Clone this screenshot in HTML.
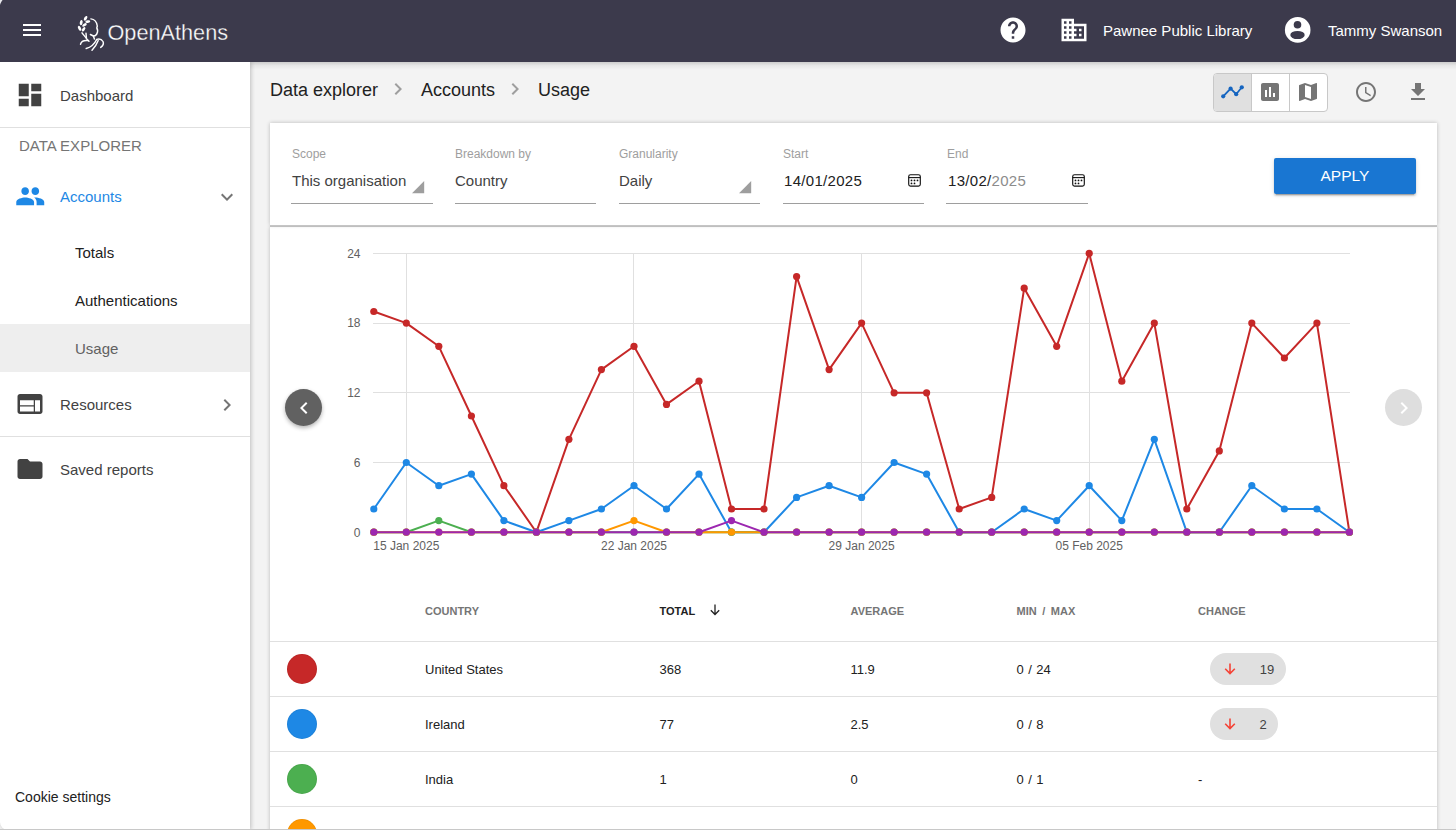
<!DOCTYPE html>
<html><head><meta charset="utf-8">
<style>
*{box-sizing:border-box;margin:0;padding:0}
html,body{width:1456px;height:830px;overflow:hidden;background:#f3f3f3;font-family:"Liberation Sans",sans-serif;color:#212121}
svg text{font-family:"Liberation Sans",sans-serif}
.abs{position:absolute}
.t{position:absolute;white-space:nowrap;line-height:1}
#top{position:absolute;left:0;top:0;width:1456px;height:62px;background:#3c3a4c;z-index:10}
#side{position:absolute;left:0;top:62px;width:250px;height:768px;background:#fff;box-shadow:1px 0 4px rgba(0,0,0,.22);z-index:8;border-bottom-left-radius:8px}
.card{position:absolute;background:#fff;box-shadow:0 0 4px rgba(0,0,0,.24)}
.lbl{font-size:12px;color:#9e9e9e}
.val{font-size:15px;color:#424242}
.uline{position:absolute;height:1px;background:#9e9e9e}
.th{font-size:11px;font-weight:bold;color:#757575}
.td{font-size:13px;color:#212121}
.rowline{position:absolute;left:270px;width:1167px;height:1px;background:#e0e0e0;z-index:4}
</style></head>
<body>
<!-- TOP BAR -->
<div id="top">
  <div class="abs" style="left:23px;top:24px;width:18px;height:2px;background:#fff"></div>
  <div class="abs" style="left:23px;top:29px;width:18px;height:2px;background:#fff"></div>
  <div class="abs" style="left:23px;top:34px;width:18px;height:2px;background:#fff"></div>
  <!-- logo -->
  <svg class="abs" style="left:74px;top:12px" width="34" height="40" viewBox="0 0 34 40" fill="none" stroke="#fff" stroke-width="1.45" stroke-linecap="round" stroke-linejoin="round">
    <g fill="#fff" stroke="none">
      <ellipse cx="11.6" cy="6.3" rx="1.4" ry="2.6" transform="rotate(30 11.6 6.3)"/>
      <ellipse cx="13.8" cy="9.6" rx="2.5" ry="1.3" transform="rotate(-8 13.8 9.6)"/>
      <ellipse cx="7.2" cy="10.6" rx="1.4" ry="2.7" transform="rotate(12 7.2 10.6)"/>
      <ellipse cx="10.5" cy="12.9" rx="2.5" ry="1.3" transform="rotate(-30 10.5 12.9)"/>
      <ellipse cx="5.6" cy="16.3" rx="1.4" ry="2.7" transform="rotate(-28 5.6 16.3)"/>
      <ellipse cx="9.6" cy="17.3" rx="1.3" ry="2.5" transform="rotate(35 9.6 17.3)"/>
    </g>
    <path d="M8 20.8 C9.5 23,11.5 25,12.8 27 L15 29.3"/>
    <path d="M12 21.2 L12.4 25.8"/>
    <path d="M13.8 28.6 C11 28.3,7.5 28.5,6.5 32.3"/>
    <path d="M16.9 6.9 C20 7.2,22.6 9.5,23.3 14 L22.8 16 C23.8 17.5,23.8 20,22.8 22 C22 23.3,20.5 24.2,19.4 24 L16.4 22.5"/>
    <path d="M19.4 24 L20.4 27"/>
    <path d="M12.2 36.5 C16 35.5,20.5 32,22.5 27.8"/>
    <path d="M18 38.2 C20.5 35.5,23 32,24.2 28.6"/>
    <path d="M22.6 27.4 C25 26.6,27.5 27,29 29.5 C30 31.5,28.5 34,26.7 35.4"/>
  </svg>
  <svg class="abs" style="left:106px;top:14px" width="130" height="34" viewBox="0 0 130 34">
    <text x="1.5" y="25.6" font-size="21.7" fill="#fff" stroke="#3c3a4c" stroke-width="0.3">OpenAthens</text>
  </svg>
  <!-- help -->
  <svg class="abs" style="left:998px;top:15px" width="30" height="30" viewBox="0 0 24 24"><path fill="#fff" d="M12 2C6.48 2 2 6.48 2 12s4.48 10 10 10 10-4.48 10-10S17.52 2 12 2zm1 17h-2v-2h2v2zm2.07-7.75l-.9.92C13.45 12.9 13 13.5 13 15h-2v-.5c0-1.1.45-2.1 1.17-2.83l1.24-1.26c.37-.36.59-.86.59-1.41 0-1.1-.9-2-2-2s-2 .9-2 2H8c0-2.21 1.79-4 4-4s4 1.79 4 4c0 .88-.36 1.68-.93 2.25z"/></svg>
  <!-- business -->
  <svg class="abs" style="left:1058.5px;top:15px" width="30" height="30" viewBox="0 0 24 24"><path fill="#fff" d="M12 7V3H2v18h20V7H12zM6 19H4v-2h2v2zm0-4H4v-2h2v2zm0-4H4V9h2v2zm0-4H4V5h2v2zm4 12H8v-2h2v2zm0-4H8v-2h2v2zm0-4H8V9h2v2zm0-4H8V5h2v2zm10 12h-8v-2h2v-2h-2v-2h2v-2h-2V9h8v10zm-2-8h-2v2h2v-2zm0 4h-2v2h2v-2z"/></svg>
  <div class="t" style="left:1103px;top:23.3px;font-size:15px;color:#fff">Pawnee Public Library</div>
  <!-- account -->
  <svg class="abs" style="left:1284px;top:17px" width="28" height="26" viewBox="0 0 28 26">
    <circle cx="13.7" cy="12.9" r="12.8" fill="#fff"/>
    <circle cx="13.5" cy="7.7" r="3.8" fill="#3c3a4c"/>
    <ellipse cx="13.5" cy="18" rx="7.2" ry="4.1" fill="#3c3a4c"/>
  </svg>
  <div class="t" style="left:1328px;top:23.3px;font-size:15px;color:#fff">Tammy Swanson</div>
</div>

<!-- SIDEBAR -->
<div id="side">
  <svg class="abs" style="left:15.1px;top:18.25px" width="30" height="30" viewBox="0 0 24 24"><path fill="#424242" d="M3 13h8V3H3v10zm0 8h8v-6H3v6zm10 0h8V11h-8v10zm0-18v6h8V3h-8z"/></svg>
  <div class="t" style="left:60px;top:26.3px;font-size:15px;color:#424242">Dashboard</div>
  <div class="abs" style="left:0;top:65px;width:250px;height:1px;background:#e0e0e0"></div>
  <div class="t" style="left:19px;top:76.2px;font-size:15px;color:#757575">DATA EXPLORER</div>
  <svg class="abs" style="left:14.7px;top:118.6px" width="30.5" height="30.5" viewBox="0 0 24 24"><path fill="#1e88e5" d="M16 11c1.66 0 2.99-1.34 2.99-3S17.66 5 16 5c-1.66 0-3 1.34-3 3s1.34 3 3 3zm-8 0c1.66 0 2.99-1.34 2.99-3S9.66 5 8 5C6.34 5 5 6.34 5 8s1.34 3 3 3zm0 2c-2.33 0-7 1.17-7 3.5V19h14v-2.5c0-2.33-4.67-3.5-7-3.5zm8 0c-.29 0-.62.02-.97.05 1.16.84 1.97 1.97 1.97 3.45V19h6v-2.5c0-2.33-4.67-3.5-7-3.5z"/></svg>
  <div class="t" style="left:60px;top:127.3px;font-size:15px;color:#1e88e5">Accounts</div>
  <svg class="abs" style="left:215px;top:123px" width="24" height="24" viewBox="0 0 24 24"><path fill="#757575" d="M16.59 8.59L12 13.17 7.41 8.59 6 10l6 6 6-6z"/></svg>
  <div class="t" style="left:75px;top:183.3px;font-size:15px;color:#212121">Totals</div>
  <div class="t" style="left:75px;top:231.3px;font-size:15px;color:#212121">Authentications</div>
  <div class="abs" style="left:0;top:262px;width:250px;height:48px;background:#eeeeee"></div>
  <div class="t" style="left:75px;top:279.3px;font-size:15px;color:#616161">Usage</div>
  <svg class="abs" style="left:15px;top:326.8px" width="30" height="30" viewBox="0 0 24 24"><path fill="#424242" d="M20 4H4c-1.1 0-1.99.9-1.99 2L2 18c0 1.1.9 2 2 2h16c1.1 0 2-.9 2-2V6c0-1.1-.9-2-2-2zm-5 14H4v-4h11v4zm0-5H4V9h11v4zm5 5h-4V9h4v9z"/></svg>
  <div class="t" style="left:60px;top:335.3px;font-size:15px;color:#424242">Resources</div>
  <svg class="abs" style="left:215px;top:331px" width="24" height="24" viewBox="0 0 24 24"><path fill="#757575" d="M10 6L8.59 7.41 13.17 12l-4.58 4.59L10 18l6-6z"/></svg>
  <div class="abs" style="left:0;top:374px;width:250px;height:1px;background:#e0e0e0"></div>
  <svg class="abs" style="left:15px;top:392px" width="30" height="30" viewBox="0 0 24 24"><path fill="#424242" d="M10 4H4c-1.1 0-1.99.9-1.99 2L2 18c0 1.1.9 2 2 2h16c1.1 0 2-.9 2-2V8c0-1.1-.9-2-2-2h-8l-2-2z"/></svg>
  <div class="t" style="left:60px;top:400px;font-size:15px;color:#424242">Saved reports</div>
  <div class="t" style="left:15px;top:728px;font-size:14px;color:#212121">Cookie settings</div>
</div>

<div class="abs" style="left:250px;top:62px;width:1206px;height:8px;background:linear-gradient(rgba(0,0,0,.16),rgba(0,0,0,.05) 45%,rgba(0,0,0,0));z-index:7"></div>
<!-- BREADCRUMB -->
<div class="t" style="left:270px;top:80.8px;font-size:18px;color:#212121">Data explorer</div>
<svg class="abs" style="left:386.2px;top:77.2px" width="24" height="24" viewBox="0 0 24 24"><path fill="#9e9e9e" d="M10 6L8.59 7.41 13.17 12l-4.58 4.59L10 18l6-6z"/></svg>
<div class="t" style="left:421px;top:80.8px;font-size:18px;color:#212121">Accounts</div>
<svg class="abs" style="left:503.3px;top:77.2px" width="24" height="24" viewBox="0 0 24 24"><path fill="#9e9e9e" d="M10 6L8.59 7.41 13.17 12l-4.58 4.59L10 18l6-6z"/></svg>
<div class="t" style="left:538px;top:80.8px;font-size:18px;color:#212121">Usage</div>

<!-- TOOLBAR -->
<div class="abs" style="left:1213px;top:73px;width:115px;height:39px;border:1px solid #c8c8c8;border-radius:4px;background:#fff;overflow:hidden">
  <div class="abs" style="left:0;top:0;width:37px;height:37px;background:#e0e0e0"></div>
  <div class="abs" style="left:37px;top:0;width:1px;height:37px;background:#c8c8c8"></div>
  <div class="abs" style="left:75px;top:0;width:1px;height:37px;background:#c8c8c8"></div>
</div>
<svg class="abs" style="left:1213px;top:73px" width="115" height="39" viewBox="1213 73 115 39">
  <polyline points="1223.2,96.3 1230.6,88.6 1236.2,94.2 1241.8,87.3" fill="none" stroke="#1565c0" stroke-width="1.8"/>
  <g fill="#1565c0"><circle cx="1223.2" cy="96.3" r="2.1"/><circle cx="1230.6" cy="88.6" r="2.1"/><circle cx="1236.2" cy="94.2" r="2.1"/><circle cx="1241.8" cy="87.3" r="2.1"/></g>
</svg>
<svg class="abs" style="left:1258.3px;top:80.1px" width="24" height="24" viewBox="0 0 24 24"><path fill="#757575" d="M19 3H5c-1.1 0-2 .9-2 2v14c0 1.1.9 2 2 2h14c1.1 0 2-.9 2-2V5c0-1.1-.9-2-2-2zM9 17H7v-7h2v7zm4 0h-2V7h2v10zm4 0h-2v-4h2v4z"/></svg>
<svg class="abs" style="left:1296.4px;top:80px" width="24" height="24" viewBox="0 0 24 24"><path fill="#757575" d="M20.5 3l-.16.03L15 5.1 9 3 3.36 4.9c-.21.07-.36.25-.36.48V20.5c0 .28.22.5.5.5l.16-.03L9 18.9l6 2.1 5.64-1.9c.21-.07.36-.25.36-.48V3.5c0-.28-.22-.5-.5-.5zM15 19l-6-2.11V5l6 2.11V19z"/></svg>
<svg class="abs" style="left:1354.3px;top:80px" width="24" height="24" viewBox="0 0 24 24"><path fill="#757575" d="M11.99 2C6.47 2 2 6.48 2 12s4.47 10 9.99 10C17.52 22 22 17.52 22 12S17.52 2 11.99 2zM12 20c-4.42 0-8-3.58-8-8s3.58-8 8-8 8 3.58 8 8-3.58 8-8 8zm.5-13H11v6l5.25 3.15.75-1.23-4.5-2.67z"/></svg>
<svg class="abs" style="left:1406px;top:80px" width="24" height="24" viewBox="0 0 24 24"><path fill="#757575" d="M19 9h-4V3H9v6H5l7 7 7-7zM5 18v2h14v-2H5z"/></svg>

<!-- FILTER CARD -->
<div class="card" style="left:270px;top:123px;width:1167px;height:102px;z-index:3"></div>
<div class="abs" style="left:270px;top:225px;width:1167px;height:2px;background:linear-gradient(#c8c8c8,#bcbcbc);z-index:3"></div>
<div style="position:absolute;left:0;top:0;z-index:5">
  <div class="t lbl" style="left:292px;top:147.8px">Scope</div>
  <div class="t val" style="left:292px;top:173.2px">This organisation</div>
  <svg class="abs" style="left:412px;top:181px" width="13" height="13" viewBox="0 0 13 13"><path fill="#9e9e9e" d="M0 12.2H12.2V0z"/></svg>
  <div class="uline" style="left:291px;top:203px;width:142px"></div>

  <div class="t lbl" style="left:455px;top:147.8px">Breakdown by</div>
  <div class="t val" style="left:455px;top:173.2px">Country</div>
  <div class="uline" style="left:455px;top:203px;width:141px"></div>

  <div class="t lbl" style="left:619px;top:147.8px">Granularity</div>
  <div class="t val" style="left:619px;top:173.2px">Daily</div>
  <svg class="abs" style="left:739px;top:181px" width="13" height="13" viewBox="0 0 13 13"><path fill="#9e9e9e" d="M0 12.2H12.2V0z"/></svg>
  <div class="uline" style="left:619px;top:203px;width:141px"></div>

  <div class="t lbl" style="left:783px;top:147.8px">Start</div>
  <div class="t val" style="left:784px;top:173.2px;color:#212121;letter-spacing:0.3px">14/01/2025</div>
  <svg class="abs" style="left:907px;top:173px" width="15" height="15" viewBox="0 0 15 15"><rect x="1.7" y="1.7" width="11.6" height="11.4" rx="1.8" fill="none" stroke="#111" stroke-width="1.15"/><path d="M1.7 4.6h11.6" stroke="#111" stroke-width="1.1"/><g fill="#111"><circle cx="4.5" cy="7.4" r="0.9"/><circle cx="7.5" cy="7.4" r="0.9"/><circle cx="10.5" cy="7.4" r="0.9"/><circle cx="4.5" cy="10.4" r="0.9"/><circle cx="7.5" cy="10.4" r="0.9"/></g></svg>
  <div class="uline" style="left:783px;top:203px;width:141px"></div>

  <div class="t lbl" style="left:947px;top:147.8px">End</div>
  <div class="t val" style="left:948px;top:173.2px;color:#212121;letter-spacing:0.3px">13/02/<span style="color:#8c8c8c">2025</span></div>
  <svg class="abs" style="left:1071px;top:173px" width="15" height="15" viewBox="0 0 15 15"><rect x="1.7" y="1.7" width="11.6" height="11.4" rx="1.8" fill="none" stroke="#111" stroke-width="1.15"/><path d="M1.7 4.6h11.6" stroke="#111" stroke-width="1.1"/><g fill="#111"><circle cx="4.5" cy="7.4" r="0.9"/><circle cx="7.5" cy="7.4" r="0.9"/><circle cx="10.5" cy="7.4" r="0.9"/><circle cx="4.5" cy="10.4" r="0.9"/><circle cx="7.5" cy="10.4" r="0.9"/></g></svg>
  <div class="uline" style="left:946px;top:203px;width:142px"></div>

  <div class="abs" style="left:1274px;top:158px;width:142px;height:36px;background:#1976d2;border-radius:2px;box-shadow:0 3px 1px -2px rgba(0,0,0,.2),0 2px 2px 0 rgba(0,0,0,.14),0 1px 5px 0 rgba(0,0,0,.12)"></div>
  <div class="t" style="left:1320.5px;top:168px;font-size:15.5px;color:#fff;letter-spacing:0px">APPLY</div>
</div>

<!-- CHART CARD -->
<div class="card" style="left:270px;top:227px;width:1167px;height:640px;z-index:2"></div>
<!-- nav buttons -->
<div class="abs" style="left:285px;top:389.3px;width:37px;height:37px;border-radius:50%;background:#616161;z-index:5;box-shadow:0 2px 4px rgba(0,0,0,.3)"></div>
<svg class="abs" style="left:291.9px;top:395.9px;z-index:6" width="24" height="24" viewBox="0 0 24 24"><path fill="#fff" d="M15.41 7.41L14 6l-6 6 6 6 1.41-1.41L10.83 12z"/></svg>
<div class="abs" style="left:1385px;top:389.3px;width:37px;height:37px;border-radius:50%;background:#dedede;z-index:5"></div>
<svg class="abs" style="left:1391.5px;top:395.9px;z-index:6" width="24" height="24" viewBox="0 0 24 24"><path fill="#fff" d="M10 6L8.59 7.41 13.17 12l-4.58 4.59L10 18l6-6z"/></svg>

<svg class="abs" style="left:0;top:0;z-index:4" width="1456" height="830" viewBox="0 0 1456 830">
<path d="M373 532.5H1350 M373 462.5H1350 M373 392.5H1350 M373 323.5H1350 M373 253.5H1350 M406.5 253V532 M633.5 253V532 M861.5 253V532 M1089.5 253V532" stroke="#e0e0e0" stroke-width="1" fill="none"/>
<text x="360.5" y="536.5" text-anchor="end" font-size="12" fill="#616161">0</text>
<text x="360.5" y="466.8" text-anchor="end" font-size="12" fill="#616161">6</text>
<text x="360.5" y="397.1" text-anchor="end" font-size="12" fill="#616161">12</text>
<text x="360.5" y="327.4" text-anchor="end" font-size="12" fill="#616161">18</text>
<text x="360.5" y="257.7" text-anchor="end" font-size="12" fill="#616161">24</text>
<text x="406.3" y="549.8" text-anchor="middle" font-size="12" fill="#616161">15 Jan 2025</text>
<text x="634.0" y="549.8" text-anchor="middle" font-size="12" fill="#616161">22 Jan 2025</text>
<text x="861.6" y="549.8" text-anchor="middle" font-size="12" fill="#616161">29 Jan 2025</text>
<text x="1089.2" y="549.8" text-anchor="middle" font-size="12" fill="#616161">05 Feb 2025</text>
<polyline points="373.8,311.5 406.3,323.1 438.8,346.3 471.4,416.0 503.9,485.7 536.4,532.2 568.9,439.3 601.4,369.6 634.0,346.3 666.5,404.4 699.0,381.2 731.5,509.0 764.0,509.0 796.6,276.6 829.1,369.6 861.6,323.1 894.1,392.8 926.6,392.8 959.2,509.0 991.7,497.4 1024.2,288.2 1056.7,346.3 1089.2,253.4 1121.8,381.2 1154.3,323.1 1186.8,509.0 1219.3,450.9 1251.8,323.1 1284.4,358.0 1316.9,323.1 1349.4,532.2" fill="none" stroke="#c62828" stroke-width="2" stroke-linejoin="round"/>
<g fill="#c62828"><circle cx="373.8" cy="311.5" r="3.6"/><circle cx="406.3" cy="323.1" r="3.6"/><circle cx="438.8" cy="346.3" r="3.6"/><circle cx="471.4" cy="416.0" r="3.6"/><circle cx="503.9" cy="485.7" r="3.6"/><circle cx="536.4" cy="532.2" r="3.6"/><circle cx="568.9" cy="439.3" r="3.6"/><circle cx="601.4" cy="369.6" r="3.6"/><circle cx="634.0" cy="346.3" r="3.6"/><circle cx="666.5" cy="404.4" r="3.6"/><circle cx="699.0" cy="381.2" r="3.6"/><circle cx="731.5" cy="509.0" r="3.6"/><circle cx="764.0" cy="509.0" r="3.6"/><circle cx="796.6" cy="276.6" r="3.6"/><circle cx="829.1" cy="369.6" r="3.6"/><circle cx="861.6" cy="323.1" r="3.6"/><circle cx="894.1" cy="392.8" r="3.6"/><circle cx="926.6" cy="392.8" r="3.6"/><circle cx="959.2" cy="509.0" r="3.6"/><circle cx="991.7" cy="497.4" r="3.6"/><circle cx="1024.2" cy="288.2" r="3.6"/><circle cx="1056.7" cy="346.3" r="3.6"/><circle cx="1089.2" cy="253.4" r="3.6"/><circle cx="1121.8" cy="381.2" r="3.6"/><circle cx="1154.3" cy="323.1" r="3.6"/><circle cx="1186.8" cy="509.0" r="3.6"/><circle cx="1219.3" cy="450.9" r="3.6"/><circle cx="1251.8" cy="323.1" r="3.6"/><circle cx="1284.4" cy="358.0" r="3.6"/><circle cx="1316.9" cy="323.1" r="3.6"/><circle cx="1349.4" cy="532.2" r="3.6"/></g>
<polyline points="373.8,509.0 406.3,462.5 438.8,485.7 471.4,474.1 503.9,520.6 536.4,532.2 568.9,520.6 601.4,509.0 634.0,485.7 666.5,509.0 699.0,474.1 731.5,532.2 764.0,532.2 796.6,497.4 829.1,485.7 861.6,497.4 894.1,462.5 926.6,474.1 959.2,532.2 991.7,532.2 1024.2,509.0 1056.7,520.6 1089.2,485.7 1121.8,520.6 1154.3,439.3 1186.8,532.2 1219.3,532.2 1251.8,485.7 1284.4,509.0 1316.9,509.0 1349.4,532.2" fill="none" stroke="#1e88e5" stroke-width="2" stroke-linejoin="round"/>
<g fill="#1e88e5"><circle cx="373.8" cy="509.0" r="3.6"/><circle cx="406.3" cy="462.5" r="3.6"/><circle cx="438.8" cy="485.7" r="3.6"/><circle cx="471.4" cy="474.1" r="3.6"/><circle cx="503.9" cy="520.6" r="3.6"/><circle cx="536.4" cy="532.2" r="3.6"/><circle cx="568.9" cy="520.6" r="3.6"/><circle cx="601.4" cy="509.0" r="3.6"/><circle cx="634.0" cy="485.7" r="3.6"/><circle cx="666.5" cy="509.0" r="3.6"/><circle cx="699.0" cy="474.1" r="3.6"/><circle cx="731.5" cy="532.2" r="3.6"/><circle cx="764.0" cy="532.2" r="3.6"/><circle cx="796.6" cy="497.4" r="3.6"/><circle cx="829.1" cy="485.7" r="3.6"/><circle cx="861.6" cy="497.4" r="3.6"/><circle cx="894.1" cy="462.5" r="3.6"/><circle cx="926.6" cy="474.1" r="3.6"/><circle cx="959.2" cy="532.2" r="3.6"/><circle cx="991.7" cy="532.2" r="3.6"/><circle cx="1024.2" cy="509.0" r="3.6"/><circle cx="1056.7" cy="520.6" r="3.6"/><circle cx="1089.2" cy="485.7" r="3.6"/><circle cx="1121.8" cy="520.6" r="3.6"/><circle cx="1154.3" cy="439.3" r="3.6"/><circle cx="1186.8" cy="532.2" r="3.6"/><circle cx="1219.3" cy="532.2" r="3.6"/><circle cx="1251.8" cy="485.7" r="3.6"/><circle cx="1284.4" cy="509.0" r="3.6"/><circle cx="1316.9" cy="509.0" r="3.6"/><circle cx="1349.4" cy="532.2" r="3.6"/></g>
<polyline points="373.8,532.2 406.3,532.2 438.8,520.6 471.4,532.2 503.9,532.2 536.4,532.2 568.9,532.2 601.4,532.2 634.0,532.2 666.5,532.2 699.0,532.2 731.5,532.2 764.0,532.2 796.6,532.2 829.1,532.2 861.6,532.2 894.1,532.2 926.6,532.2 959.2,532.2 991.7,532.2 1024.2,532.2 1056.7,532.2 1089.2,532.2 1121.8,532.2 1154.3,532.2 1186.8,532.2 1219.3,532.2 1251.8,532.2 1284.4,532.2 1316.9,532.2 1349.4,532.2" fill="none" stroke="#4caf50" stroke-width="2" stroke-linejoin="round"/>
<g fill="#4caf50"><circle cx="373.8" cy="532.2" r="3.6"/><circle cx="406.3" cy="532.2" r="3.6"/><circle cx="438.8" cy="520.6" r="3.6"/><circle cx="471.4" cy="532.2" r="3.6"/><circle cx="503.9" cy="532.2" r="3.6"/><circle cx="536.4" cy="532.2" r="3.6"/><circle cx="568.9" cy="532.2" r="3.6"/><circle cx="601.4" cy="532.2" r="3.6"/><circle cx="634.0" cy="532.2" r="3.6"/><circle cx="666.5" cy="532.2" r="3.6"/><circle cx="699.0" cy="532.2" r="3.6"/><circle cx="731.5" cy="532.2" r="3.6"/><circle cx="764.0" cy="532.2" r="3.6"/><circle cx="796.6" cy="532.2" r="3.6"/><circle cx="829.1" cy="532.2" r="3.6"/><circle cx="861.6" cy="532.2" r="3.6"/><circle cx="894.1" cy="532.2" r="3.6"/><circle cx="926.6" cy="532.2" r="3.6"/><circle cx="959.2" cy="532.2" r="3.6"/><circle cx="991.7" cy="532.2" r="3.6"/><circle cx="1024.2" cy="532.2" r="3.6"/><circle cx="1056.7" cy="532.2" r="3.6"/><circle cx="1089.2" cy="532.2" r="3.6"/><circle cx="1121.8" cy="532.2" r="3.6"/><circle cx="1154.3" cy="532.2" r="3.6"/><circle cx="1186.8" cy="532.2" r="3.6"/><circle cx="1219.3" cy="532.2" r="3.6"/><circle cx="1251.8" cy="532.2" r="3.6"/><circle cx="1284.4" cy="532.2" r="3.6"/><circle cx="1316.9" cy="532.2" r="3.6"/><circle cx="1349.4" cy="532.2" r="3.6"/></g>
<polyline points="373.8,532.2 406.3,532.2 438.8,532.2 471.4,532.2 503.9,532.2 536.4,532.2 568.9,532.2 601.4,532.2 634.0,520.6 666.5,532.2 699.0,532.2 731.5,532.2 764.0,532.2 796.6,532.2 829.1,532.2 861.6,532.2 894.1,532.2 926.6,532.2 959.2,532.2 991.7,532.2 1024.2,532.2 1056.7,532.2 1089.2,532.2 1121.8,532.2 1154.3,532.2 1186.8,532.2 1219.3,532.2 1251.8,532.2 1284.4,532.2 1316.9,532.2 1349.4,532.2" fill="none" stroke="#ff9800" stroke-width="2" stroke-linejoin="round"/>
<g fill="#ff9800"><circle cx="373.8" cy="532.2" r="3.6"/><circle cx="406.3" cy="532.2" r="3.6"/><circle cx="438.8" cy="532.2" r="3.6"/><circle cx="471.4" cy="532.2" r="3.6"/><circle cx="503.9" cy="532.2" r="3.6"/><circle cx="536.4" cy="532.2" r="3.6"/><circle cx="568.9" cy="532.2" r="3.6"/><circle cx="601.4" cy="532.2" r="3.6"/><circle cx="634.0" cy="520.6" r="3.6"/><circle cx="666.5" cy="532.2" r="3.6"/><circle cx="699.0" cy="532.2" r="3.6"/><circle cx="731.5" cy="532.2" r="3.6"/><circle cx="764.0" cy="532.2" r="3.6"/><circle cx="796.6" cy="532.2" r="3.6"/><circle cx="829.1" cy="532.2" r="3.6"/><circle cx="861.6" cy="532.2" r="3.6"/><circle cx="894.1" cy="532.2" r="3.6"/><circle cx="926.6" cy="532.2" r="3.6"/><circle cx="959.2" cy="532.2" r="3.6"/><circle cx="991.7" cy="532.2" r="3.6"/><circle cx="1024.2" cy="532.2" r="3.6"/><circle cx="1056.7" cy="532.2" r="3.6"/><circle cx="1089.2" cy="532.2" r="3.6"/><circle cx="1121.8" cy="532.2" r="3.6"/><circle cx="1154.3" cy="532.2" r="3.6"/><circle cx="1186.8" cy="532.2" r="3.6"/><circle cx="1219.3" cy="532.2" r="3.6"/><circle cx="1251.8" cy="532.2" r="3.6"/><circle cx="1284.4" cy="532.2" r="3.6"/><circle cx="1316.9" cy="532.2" r="3.6"/><circle cx="1349.4" cy="532.2" r="3.6"/></g>
<polyline points="373.8,532.2 406.3,532.2 438.8,532.2 471.4,532.2 503.9,532.2 536.4,532.2 568.9,532.2 601.4,532.2 634.0,532.2 666.5,532.2 699.0,532.2 731.5,520.6 764.0,532.2 796.6,532.2 829.1,532.2 861.6,532.2 894.1,532.2 926.6,532.2 959.2,532.2 991.7,532.2 1024.2,532.2 1056.7,532.2 1089.2,532.2 1121.8,532.2 1154.3,532.2 1186.8,532.2 1219.3,532.2 1251.8,532.2 1284.4,532.2 1316.9,532.2 1349.4,532.2" fill="none" stroke="#9c27b0" stroke-width="2" stroke-linejoin="round"/>
<g fill="#9c27b0"><circle cx="373.8" cy="532.2" r="3.6"/><circle cx="406.3" cy="532.2" r="3.6"/><circle cx="438.8" cy="532.2" r="3.6"/><circle cx="471.4" cy="532.2" r="3.6"/><circle cx="503.9" cy="532.2" r="3.6"/><circle cx="536.4" cy="532.2" r="3.6"/><circle cx="568.9" cy="532.2" r="3.6"/><circle cx="601.4" cy="532.2" r="3.6"/><circle cx="634.0" cy="532.2" r="3.6"/><circle cx="666.5" cy="532.2" r="3.6"/><circle cx="699.0" cy="532.2" r="3.6"/><circle cx="731.5" cy="520.6" r="3.6"/><circle cx="764.0" cy="532.2" r="3.6"/><circle cx="796.6" cy="532.2" r="3.6"/><circle cx="829.1" cy="532.2" r="3.6"/><circle cx="861.6" cy="532.2" r="3.6"/><circle cx="894.1" cy="532.2" r="3.6"/><circle cx="926.6" cy="532.2" r="3.6"/><circle cx="959.2" cy="532.2" r="3.6"/><circle cx="991.7" cy="532.2" r="3.6"/><circle cx="1024.2" cy="532.2" r="3.6"/><circle cx="1056.7" cy="532.2" r="3.6"/><circle cx="1089.2" cy="532.2" r="3.6"/><circle cx="1121.8" cy="532.2" r="3.6"/><circle cx="1154.3" cy="532.2" r="3.6"/><circle cx="1186.8" cy="532.2" r="3.6"/><circle cx="1219.3" cy="532.2" r="3.6"/><circle cx="1251.8" cy="532.2" r="3.6"/><circle cx="1284.4" cy="532.2" r="3.6"/><circle cx="1316.9" cy="532.2" r="3.6"/><circle cx="1349.4" cy="532.2" r="3.6"/></g>
</svg>

<!-- TABLE -->
<div style="position:absolute;left:0;top:0;z-index:5">
  <div class="t th" style="left:425px;top:606px">COUNTRY</div>
  <div class="t th" style="left:659.5px;top:606px;color:#212121">TOTAL</div>
  <svg class="abs" style="left:707px;top:602px" width="16" height="16" viewBox="0 0 16 16"><path d="M8 2.5V12.5M3.8 8.3L8 12.5L12.2 8.3" fill="none" stroke="#212121" stroke-width="1.3"/></svg>
  <div class="t th" style="left:850.5px;top:606px">AVERAGE</div>
  <div class="t th" style="left:1016.5px;top:606px;word-spacing:2.5px">MIN / MAX</div>
  <div class="t th" style="left:1198px;top:606px">CHANGE</div>

  <div class="abs" style="left:287px;top:654px;width:30px;height:30px;border-radius:50%;background:#c62828;border:1px solid rgba(0,0,0,.05)"></div>
  <div class="t td" style="left:425px;top:663px">United States</div>
  <div class="t td" style="left:659.5px;top:663px">368</div>
  <div class="t td" style="left:850.5px;top:663px">11.9</div>
  <div class="t td" style="left:1016.5px;top:663px;word-spacing:0.8px">0 / 24</div>
  <div class="abs" style="left:1210px;top:653px;width:76px;height:32px;border-radius:16px;background:#e0e0e0"></div>
  <svg class="abs" style="left:1222px;top:661px" width="16" height="16" viewBox="0 0 16 16"><path d="M8 2.5V12.5M3.2 7.8L8 12.6L12.8 7.8" fill="none" stroke="#f44336" stroke-width="1.6"/></svg>
  <div class="t td" style="left:1259.8px;top:663px;color:#424242">19</div>

  <div class="abs" style="left:287px;top:709px;width:30px;height:30px;border-radius:50%;background:#1e88e5;border:1px solid rgba(0,0,0,.05)"></div>
  <div class="t td" style="left:425px;top:718px">Ireland</div>
  <div class="t td" style="left:659.5px;top:718px">77</div>
  <div class="t td" style="left:850.5px;top:718px">2.5</div>
  <div class="t td" style="left:1016.5px;top:718px;word-spacing:0.8px">0 / 8</div>
  <div class="abs" style="left:1210px;top:708px;width:68px;height:32px;border-radius:16px;background:#e0e0e0"></div>
  <svg class="abs" style="left:1222px;top:716px" width="16" height="16" viewBox="0 0 16 16"><path d="M8 2.5V12.5M3.2 7.8L8 12.6L12.8 7.8" fill="none" stroke="#f44336" stroke-width="1.6"/></svg>
  <div class="t td" style="left:1259.4px;top:718px;color:#424242">2</div>

  <div class="abs" style="left:287px;top:764px;width:30px;height:30px;border-radius:50%;background:#4caf50;border:1px solid rgba(0,0,0,.05)"></div>
  <div class="t td" style="left:425px;top:773px">India</div>
  <div class="t td" style="left:659.5px;top:773px">1</div>
  <div class="t td" style="left:850.5px;top:773px">0</div>
  <div class="t td" style="left:1016.5px;top:773px;word-spacing:0.8px">0 / 1</div>
  <div class="t td" style="left:1198px;top:773px">-</div>

  <div class="abs" style="left:287px;top:819px;width:30px;height:30px;border-radius:50%;background:#ff9800;border:1px solid rgba(0,0,0,.05)"></div>
</div>
<div class="rowline" style="top:641px"></div>
<div class="rowline" style="top:696px"></div>
<div class="rowline" style="top:751px"></div>
<div class="rowline" style="top:806px"></div>
<div class="abs" style="left:0;top:829px;width:1456px;height:1px;background:#c8c8c8;z-index:20"></div>
<svg class="abs" style="left:0;top:0;z-index:20" width="6" height="8" viewBox="0 0 6 8"><path d="M0 0H2.6C1.6 1.2 0.6 3 0 5Z" fill="#e8e8ec"/></svg>
</body></html>
